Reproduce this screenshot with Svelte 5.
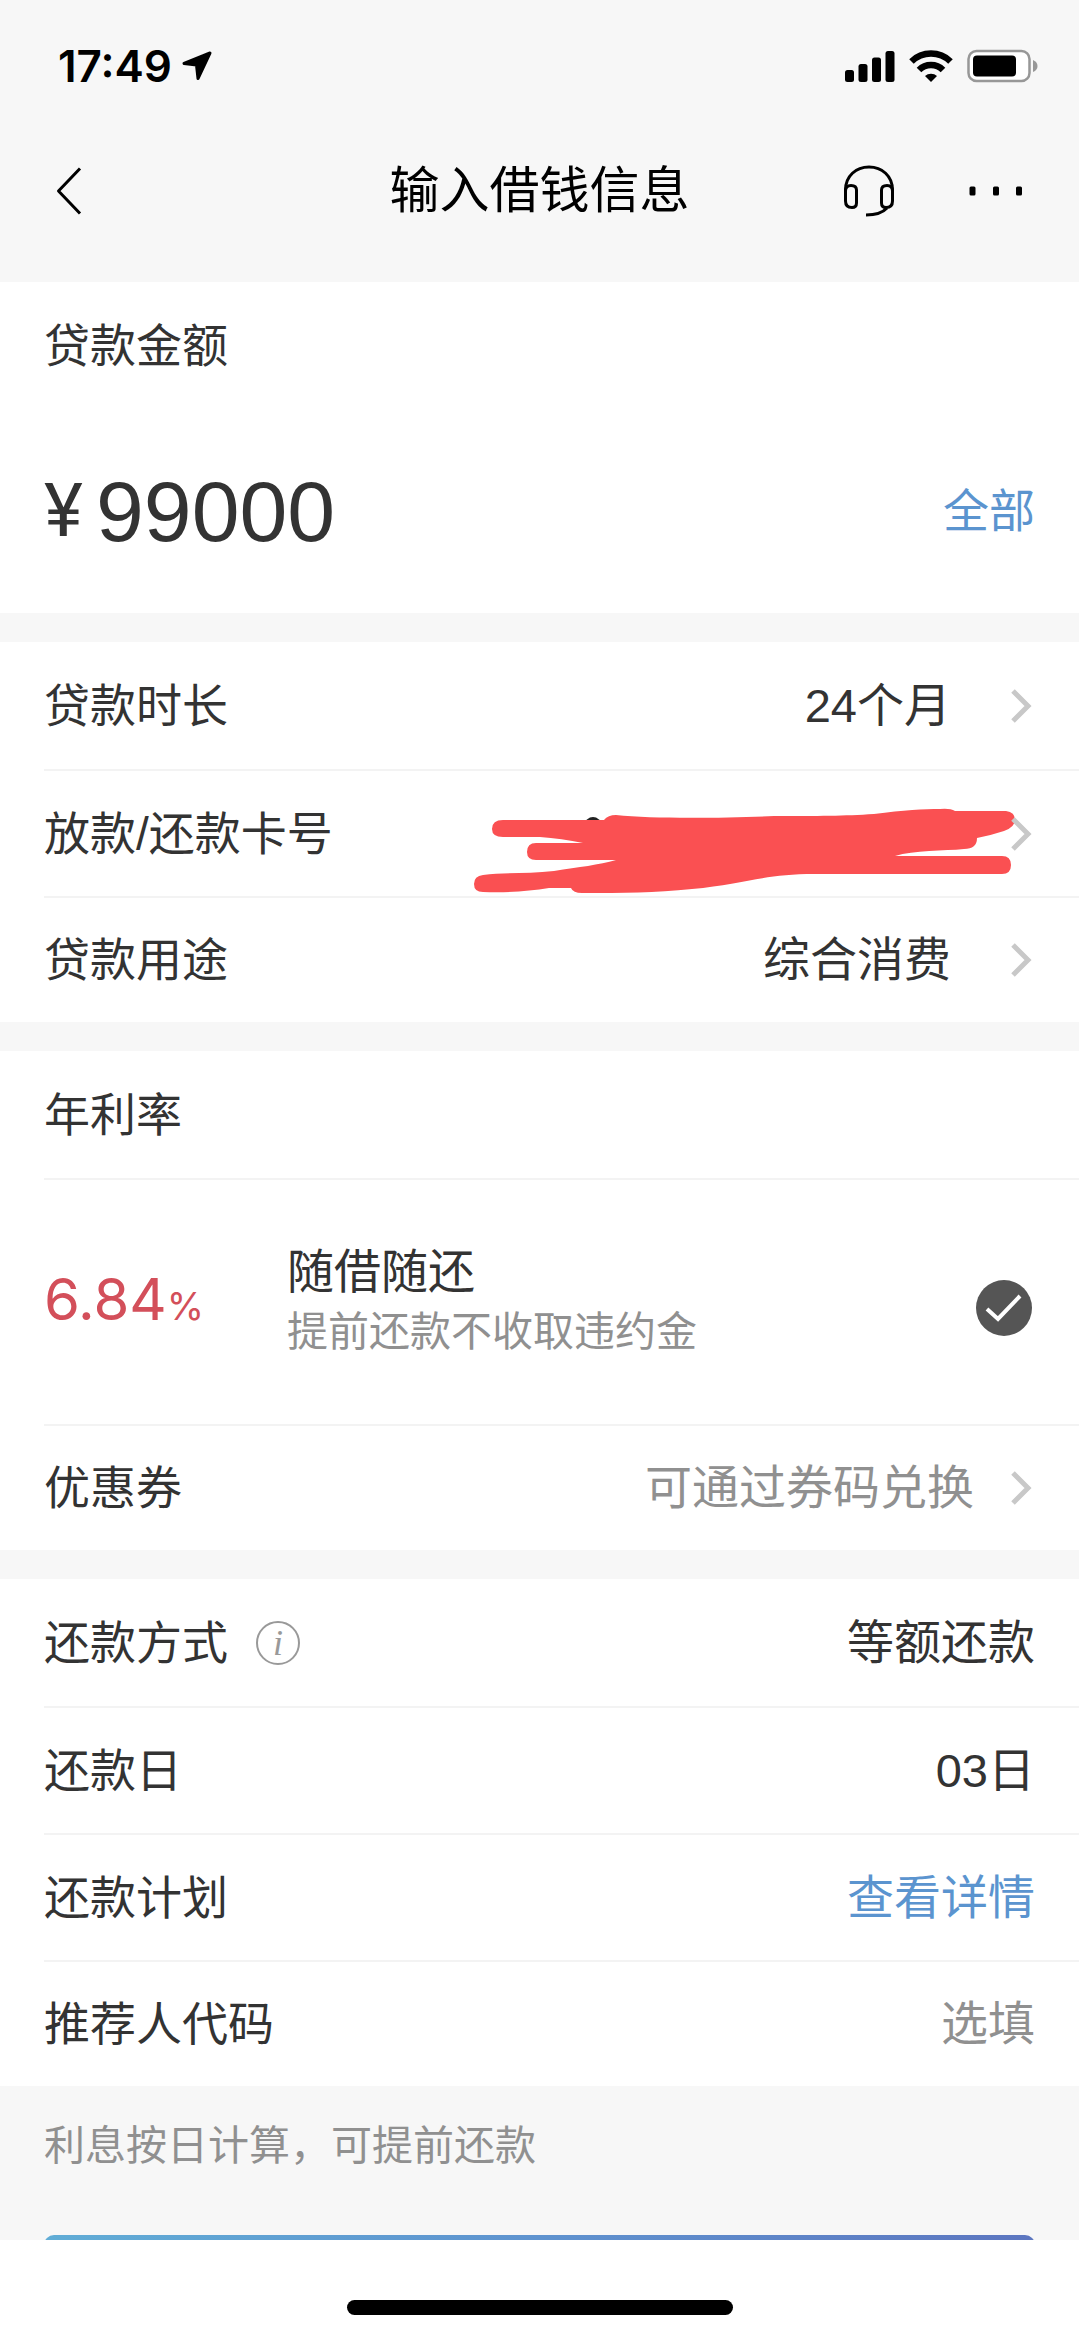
<script>
    let amount = 99000;
    let prepay = true;

    const loanRows = [
        { label: '贷款时长', value: '24个月' },
        { label: '放款/还款卡号', masked: true },
        { label: '贷款用途', value: '综合消费' },
    ];

    const repayRows = [
        { label: '还款方式', value: '等额还款', info: true },
        { label: '还款日', value: '03日' },
        { label: '还款计划', value: '查看详情', link: true },
    ];
</script>

{#snippet chevron()}
    <svg class="chevron" viewBox="0 0 24 36" aria-hidden="true">
        <path d="M2 3 L17 18 L2 33" fill="none" stroke="#c8c8c8" stroke-width="5" />
    </svg>
{/snippet}

<div class="screen">
    <header>
        <div class="status">
            <div class="clock">
                <span>17:49</span>
                <svg width="30" height="30" viewBox="0 0 30 30" aria-hidden="true">
                    <path
                        d="M28 2 L2 12.500 L14.500 14 L16 27.500 Z"
                        stroke="#000"
                        stroke-width="3"
                        stroke-linejoin="round"
                    />
                </svg>
            </div>
            <div class="indicators">
                <svg width="50" height="32" viewBox="0 0 50 32" aria-hidden="true">
                    <rect x="0" y="20" width="9" height="12" rx="2.500" />
                    <rect x="13.500" y="14" width="9" height="18" rx="2.500" />
                    <rect x="27" y="7.500" width="9" height="24.500" rx="2.500" />
                    <rect x="40.500" y="1" width="9" height="31" rx="2.500" />
                </svg>
                <svg width="44" height="32" viewBox="0 0 44 32" aria-hidden="true">
                    <path d="M2.500 11.500 A28 28 0 0 1 41.500 11.500" fill="none" stroke="#000" stroke-width="6.500" />
                    <path d="M10 20 A17 17 0 0 1 34 20" fill="none" stroke="#000" stroke-width="6.500" />
                    <path d="M16 26 A9 9 0 0 1 28 26 L22 32 Z" />
                </svg>
                <svg width="72" height="34" viewBox="0 0 72 34" aria-hidden="true">
                    <rect x="1.500" y="2" width="61" height="30" rx="8" fill="#fff" stroke="#979797" stroke-width="2.500" />
                    <rect x="6" y="6.500" width="43" height="21" rx="4" />
                    <path d="M66 11 Q70.500 13 70.500 17 Q70.500 21 66 23 Z" fill="#979797" />
                </svg>
            </div>
        </div>

        <nav>
            <div class="nav-side">
                <button aria-label="返回">
                    <svg width="28" height="50" viewBox="0 0 28 50" aria-hidden="true">
                        <path d="M24 2.500 L2.500 25 L24 47.500" fill="none" stroke="#000" stroke-width="3" stroke-linejoin="round" />
                    </svg>
                </button>
            </div>
            <h1>输入借钱信息</h1>
            <div class="nav-side end">
                <button aria-label="客服">
                    <svg width="52" height="52" viewBox="0 0 52 52" fill="none" stroke="#000" stroke-width="3" aria-hidden="true">
                        <path d="M2.500 28 V25 C2.500 11 13 2 26 2 C39 2 49.500 11 49.500 25 V28" />
                        <path d="M2.500 26 C2.500 22 4.500 20.500 8 20.500 C11.500 20.500 13.500 22 13.500 25 V38 C13.500 41 12 42.500 9 42.500 C5 42.500 2.500 40.500 2.500 36 Z" />
                        <path d="M49.500 26 C49.500 22 47.500 20.500 44 20.500 C40.500 20.500 38.500 22 38.500 25 V38 C38.500 41 40 42.500 43 42.500 C47 42.500 49.500 40.500 49.500 36 Z" />
                        <path d="M44 43 C39 48.500 32 50 23 50" />
                    </svg>
                </button>
                <button aria-label="更多">
                    <svg width="54" height="10" viewBox="0 0 54 10" aria-hidden="true">
                        <rect x="0.500" y="0.500" width="6" height="9" rx="1.500" />
                        <rect x="24" y="0.500" width="6" height="9" rx="1.500" />
                        <rect x="47" y="0.500" width="6" height="9" rx="1.500" />
                    </svg>
                </button>
            </div>
        </nav>
    </header>

    <main>
        <section>
            <div class="row">
                <label for="amount">贷款金额</label>
            </div>
            <div class="amount">
                <span class="yen">¥</span>
                <input id="amount" type="text" inputmode="numeric" bind:value={amount} />
                <button class="blue">全部</button>
            </div>
        </section>

        <section>
            {#each loanRows as row}
                <button class="row">
                    <span>{row.label}</span>
                    {#if row.masked}
                        <svg class="scribble" viewBox="0 -38 544 125" aria-hidden="true">
                            <circle cx="119" cy="16" r="8" fill="#222" />
                            <path
                                fill="#fa5052"
                                d="M29 11 H130 Q134 6 142 6 C180 10 250 9 300 7 C345 7 370 7 400 5 C430 1 450 0 466 0 Q476 -1 481 2 H532 Q541 3 541 11 Q541 18 530 22 Q518 26 503 29 Q503 40 490 40 C470 42 440 41 421 47 H528 Q537 47 537 56 Q537 65 528 65 H340 C290 65 270 75 218 80 C180 84 150 84 108 84 Q99 84 97 79 H75 C55 82 35 84 9 83 Q0 83 0 75 Q0 67 9 66 C30 63 55 65 80 62 C105 58 125 56 142 51 H62 Q53 51 53 43 Q53 34 62 34 H109 C95 31 80 29 66 28 H29 Q18 28 18 20 Q18 11 29 11 Z"
                            />
                        </svg>
                    {:else}
                        <span class="value wide">{row.value}</span>
                    {/if}
                    {@render chevron()}
                </button>
            {/each}
        </section>

        <section>
            <div class="row">
                <span>年利率</span>
            </div>
            <label class="row offer">
                <span class="rate">6.84<small>%</small></span>
                <span class="offer-text">
                    <span>随借随还</span>
                    <span class="hint">提前还款不收取违约金</span>
                </span>
                <span class="pick">
                    <input type="checkbox" bind:checked={prepay} />
                    <svg viewBox="0 0 56 56" aria-hidden="true">
                        <circle cx="28" cy="28" r="28" fill="#555" />
                        {#if prepay}
                            <path d="M11 29 L22 39 L44 16" fill="none" stroke="#fff" stroke-width="4" />
                        {/if}
                    </svg>
                </span>
            </label>
            <button class="row">
                <span>优惠券</span>
                <span class="value muted">可通过券码兑换</span>
                {@render chevron()}
            </button>
        </section>

        <section>
            {#each repayRows as row}
                <div class="row">
                    <span>{row.label}</span>
                    {#if row.info}
                        <button class="info" aria-label="还款方式说明">i</button>
                    {/if}
                    {#if row.link}
                        <a class="value blue" href="#plan">{row.value}</a>
                    {:else}
                        <span class="value">{row.value}</span>
                    {/if}
                </div>
            {/each}
            <div class="row">
                <label for="referrer">推荐人代码</label>
                <input id="referrer" class="value" type="text" placeholder="选填" />
            </div>
        </section>

        <p class="note">利息按日计算，可提前还款</p>
        <button class="submit" aria-label="下一步"></button>
    </main>

    <footer>
        <div class="home-bar"></div>
    </footer>
</div>

<style>
    :global(body) {
        margin: 0;
        background: #fff;
    }

    .screen {
        display: flex;
        flex-direction: column;
        height: 100vh;
        overflow: hidden;
        background: #f7f7f7;
        color: #333;
        font-family: 'Liberation Sans', 'Noto Sans CJK SC', sans-serif;
        font-size: 46px;
        line-height: 60px;
    }

    button,
    input {
        padding: 0;
        border: none;
        background: none;
        color: inherit;
        font: inherit;
    }

    button {
        cursor: pointer;
    }

    input {
        min-width: 0;
        outline: none;
    }

    svg {
        display: block;
        flex-shrink: 0;
    }

    header {
        flex-shrink: 0;
        padding-bottom: 32px;
        color: #000;
    }

    .status {
        display: flex;
        align-items: center;
        justify-content: space-between;
        height: 132px;
        padding: 0 40px 0 58px;
    }

    .clock {
        display: flex;
        align-items: center;
        gap: 10px;
        font-family: Inter, sans-serif;
        font-size: 44px;
        font-weight: 600;
    }

    .indicators {
        display: flex;
        align-items: center;
        gap: 14px;
    }

    nav {
        display: flex;
        align-items: center;
        height: 118px;
        padding: 0 56px;
    }

    .nav-side {
        display: flex;
        flex: 1;
        align-items: center;
    }

    .nav-side.end {
        justify-content: flex-end;
        gap: 74px;
    }

    h1 {
        margin: 0;
        font-size: 50px;
        font-weight: 400;
    }

    main {
        flex: 1;
        min-height: 0;
        overflow: hidden;
    }

    section {
        margin-bottom: 29px;
        background: #fff;
    }

    section:last-of-type {
        margin-bottom: 0;
    }

    .row {
        display: flex;
        align-items: center;
        box-sizing: border-box;
        width: calc(100% - 44px);
        height: 127px;
        margin-left: 44px;
        padding-right: 44px;
        text-align: left;
        white-space: nowrap;
    }

    .row + .row {
        border-top: 2px solid #f3f3f3;
    }

    .row:last-child {
        height: 126px;
    }

    .value {
        flex: 1;
        text-align: right;
        text-decoration: none;
    }

    .chevron {
        width: 24px;
        height: 36px;
        margin-left: 37px;
    }

    .wide + .chevron {
        margin-left: 60px;
    }

    .muted,
    .hint,
    .note,
    input::placeholder {
        color: #909090;
        opacity: 1;
    }

    .value,
    .offer-text {
        font-size: 47px;
    }

    .blue {
        color: #5b94cf;
    }

    .amount {
        display: flex;
        align-items: center;
        height: 204px;
        padding: 0 44px;
    }

    .amount input {
        flex: 1;
        height: 100px;
        font-size: 86px;
    }

    .yen {
        width: 52px;
        font-family: Roboto, sans-serif;
        font-size: 74px;
    }

    /* hand-drawn mask that covers the card number and touches the chevron */
    .scribble {
        width: 544px;
        height: 125px;
        margin-left: auto;
        overflow: visible;
    }

    .scribble + .chevron {
        margin-left: -7px;
    }

    .row.offer {
        height: 246px;
    }

    .rate {
        width: 243px;
        color: #d34f5a;
        font-family: Inter, sans-serif;
        font-size: 58px;
    }

    .rate small {
        font-size: 38px;
    }

    .offer-text {
        display: flex;
        flex: 1;
        flex-direction: column;
    }

    .hint,
    .note {
        font-size: 41px;
    }

    .pick {
        display: grid;
        padding: 12px 3px 0 0;
    }

    .pick input,
    .pick svg {
        grid-area: 1 / 1;
        width: 56px;
        height: 56px;
        margin: 0;
    }

    .pick input {
        appearance: none;
    }

    .info {
        box-sizing: border-box;
        width: 44px;
        height: 44px;
        margin-left: 28px;
        border: 2px solid #999;
        border-radius: 50%;
        color: #999;
        font-family: 'Liberation Serif', serif;
        font-size: 36px;
        font-style: italic;
        line-height: 38px;
        text-align: center;
    }

    .note {
        margin: 0 44px;
        line-height: 120px;
    }

    .submit {
        display: block;
        width: calc(100% - 88px);
        height: 126px;
        margin: 29px 44px 0;
        border-radius: 10px;
        background: linear-gradient(90deg, #61add6, #5f93cf 50%, #5d76c0);
    }

    footer {
        display: flex;
        flex-shrink: 0;
        align-items: flex-end;
        justify-content: center;
        box-sizing: border-box;
        height: 98px;
        padding-bottom: 23px;
        background: #fff;
    }

    .home-bar {
        width: 386px;
        height: 15px;
        border-radius: 8px;
        background: #000;
    }
</style>
